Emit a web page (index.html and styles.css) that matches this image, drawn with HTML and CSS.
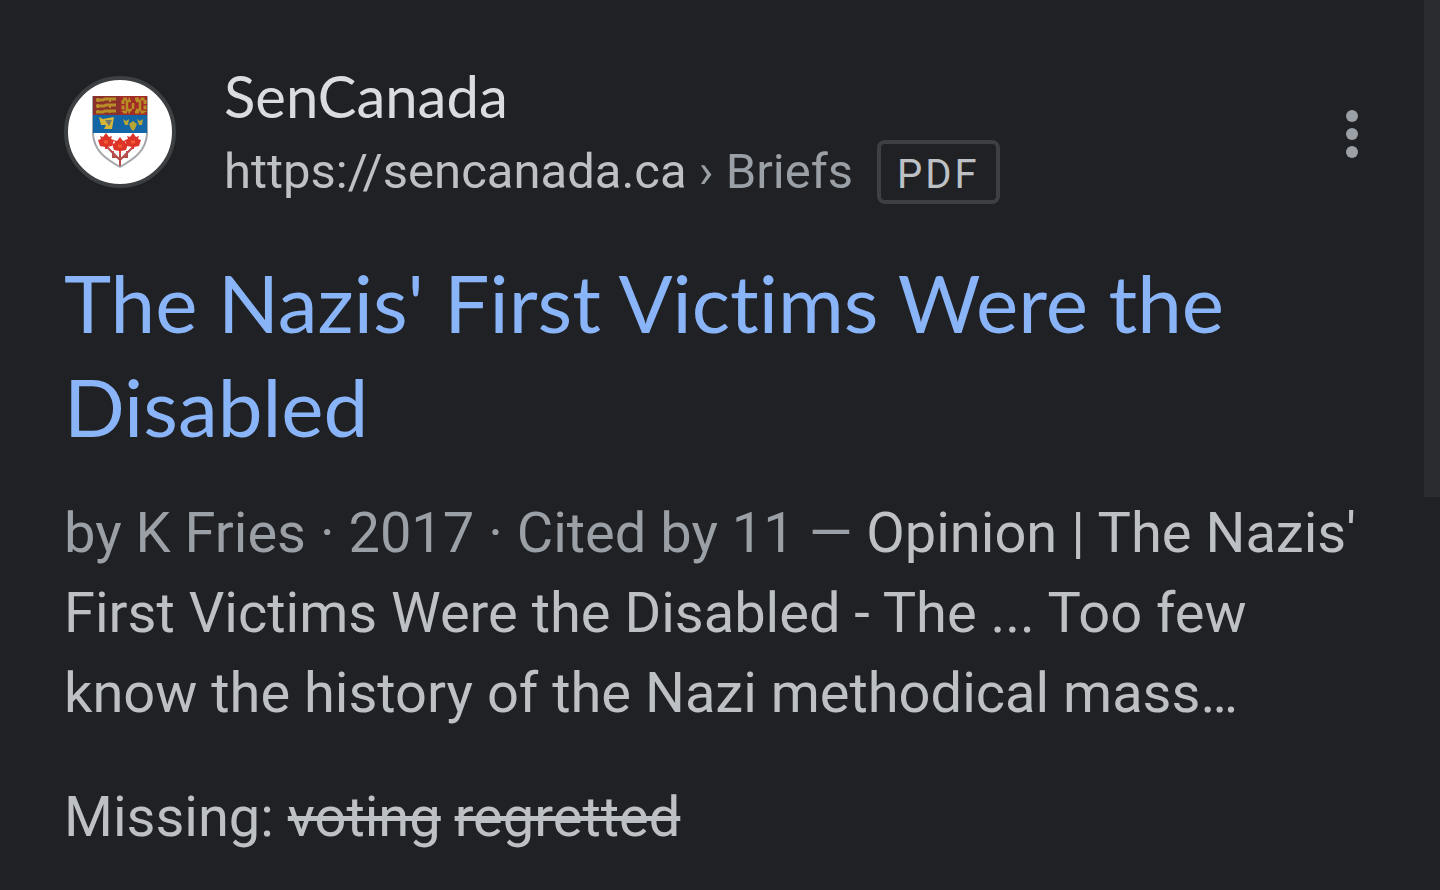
FILE: index.html
```html
<!DOCTYPE html>
<html lang="en">
<head>
    <title>Search results</title>
    <meta charset="UTF-8">
    <meta name="viewport" content="width=device-width, initial-scale=1.0">
    <link rel="stylesheet" href="styles.css">
</head>
<body>
    <main class="result">
        <header class="source">
            <div class="favicon">
                <svg viewBox="0 0 56 72" width="56" height="72" aria-hidden="true">
                    <!-- shield -->
                    <path d="M1 0H55V38C54 55 42 63 28 71C14 63 2 55 1 38Z" fill="#fff" stroke="#a3a6ab" stroke-width="2"/>
                    <path d="M1 0H28V19H1Z" fill="#8c302b"/>
                    <path d="M28 0H55V19H28Z" fill="#a32b25"/>
                    <path d="M1 19H55V37H1Z" fill="#1465a5"/>
                    <!-- lions -->
                    <g fill="none" stroke="#b78e26" stroke-width="3">
                        <path d="M4 4H11L13 3H24M4 10H12L14 9H24M4 16H11L13 15H24"/>
                        <path d="M6 2V6M18 2V6M6 8V12M18 8V12M6 14V17M18 14V17" stroke-width="2"/>
                        <path d="M31 3H38M43 3H53M31 16H38M43 16H53M31 4V16M53 4V16" stroke-dasharray="4 1.5"/>
                        <path d="M39 5H35V14H40M44 5H48V14H44M41 7V13" stroke-width="2.5"/>
                    </g>
                    <!-- harp and lilies -->
                    <path d="M7 21L11 23L22 21L20 33H12L14 29H9Z" fill="#d5b638"/>
                    <path d="M13 24L20 24L17 30Z" fill="#73776d"/>
                    <path d="M31 23L34 25L37 23L36 29L33 29ZM45 23L48 25L51 23L50 29L47 29ZM37 28L41 25L45 28L43 33L41 35L39 33Z" fill="#b9a536"/>
                    <!-- maple leaves -->
                    <path d="M14 50L28 64L42 50M28 53V70M21 55V61H25M35 55V61H31" fill="none" stroke="#b64b4b" stroke-width="2"/>
                    <g fill="#dd3328">
                        <path id="leaf" d="M14 37L17 41L20 40L19 43L22 44L20 50L15 51V53H13V51L8 50L6 44L9 43L8 40L11 41Z"/>
                        <use href="#leaf" x="27"/>
                        <use href="#leaf" x="14" y="4"/>
                    </g>
                    <path d="M12 46H16M39 46H43M26 50H30" stroke="#f05b31" stroke-width="3"/>
                </svg>
            </div>
            <div class="site">
                <div class="site-name">SenCanada</div>
                <div class="site-url">
                    <cite>https://sencanada.ca <span class="path">› Briefs</span></cite>
                    <span class="badge">PDF</span>
                </div>
            </div>
            <button class="menu" type="button" aria-label="About this result">
                <svg viewBox="0 0 12 48" width="12" height="48" aria-hidden="true">
                    <circle cx="6" cy="6" r="6"/>
                    <circle cx="6" cy="24" r="6"/>
                    <circle cx="6" cy="42" r="6"/>
                </svg>
            </button>
        </header>
        <h1 class="title"><a href="#">The Nazis' First Victims Were the Disabled</a></h1>
        <p class="snippet"><span class="meta">by K Fries · 2017 · Cited by 11 — </span>Opinion | The Nazis' First Victims Were the Disabled - The ... Too few know the history of the Nazi methodical mass…</p>
        <p class="missing">Missing: <s>voting</s> <s>regretted</s></p>
    </main>
    <div class="scrollbar"></div>
</body>
</html>
```
FILE: styles.css
```css
* {
    box-sizing: border-box;
}
body {
    margin: 0;
    background-color: #202124;
    color: #bdc1c6;
    font-family: Roboto, sans-serif;
    font-size: 56px;
    line-height: 80px;
}
.result {
    padding: 60px 76px 32px 64px;
}
.source {
    display: flex;
    align-items: center;
}
.favicon {
    display: flex;
    align-items: center;
    justify-content: center;
    width: 112px;
    height: 112px;
    margin-right: 48px;
    border: 4px solid #3c4043;
    border-radius: 50%;
    background-color: #fff;
}
.site {
    flex: 1;
}
.site-name {
    margin-bottom: 8px;
    color: #dadce0;
    font-family: Lato, sans-serif;
    font-size: 58px;
    line-height: 72px;
}
.site-url {
    display: flex;
    align-items: center;
    gap: 24px;
    font-size: 49px;
    line-height: 64px;
}
.site-url cite {
    font-style: normal;
}
.path,
.meta {
    color: #9aa0a6;
}
.badge {
    padding: 6px 16px 0;
    border: 4px solid #3c4043;
    border-radius: 8px;
    font-size: 40px;
    line-height: 50px;
    letter-spacing: 3px;
}
.menu {
    display: flex;
    padding: 4px 6px 0 0;
    border: none;
    background: none;
    cursor: pointer;
}
.menu svg {
    fill: #9aa0a6;
}
.title {
    margin: 46px 0 35px;
    font-family: Lato, sans-serif;
    font-size: 80px;
    font-weight: normal;
    font-variant-ligatures: none;
    line-height: 104px;
}
.title a {
    color: #8ab4f8;
    text-decoration: none;
}
.snippet {
    margin: 0 -8px 44px 0;
}
.missing {
    margin: 0;
}
.scrollbar {
    position: absolute;
    top: 0;
    right: 0;
    width: 16px;
    height: 497px;
    background-color: #2b2c2f;
}
```
